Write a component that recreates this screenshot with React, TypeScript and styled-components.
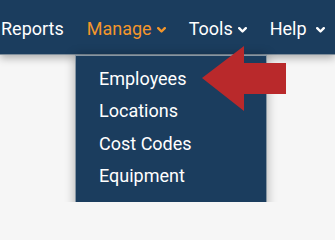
import styled, { createGlobalStyle } from "styled-components";

const GlobalStyle = createGlobalStyle`
  html, body {
    margin: 0;
    padding: 0;
    background: #f6f6f6;
    font-family: Roboto, "Liberation Sans", sans-serif;
  }
`;

const navItems = [
  { label: "Reports", caret: false },
  { label: "Manage", caret: true, active: true },
  { label: "Tools", caret: true },
  { label: "Help", caret: true, caretGap: 9 },
];

const menuItems = ["Employees", "Locations", "Cost Codes", "Equipment"];

const Chevron = ({ color }: { color: string }) => (
  <svg width="9" height="6" viewBox="0 0 9 6">
    <polyline
      points="1.2,1.2 4.5,4.5 7.8,1.2"
      fill="none"
      stroke={color}
      strokeWidth="2.4"
      strokeLinecap="round"
      strokeLinejoin="round"
    />
  </svg>
);

export default function App() {
  return (
    <>
      <GlobalStyle />
      <Page>
        <NavBar>
          {navItems.map((item) => (
            <NavItem key={item.label} $active={item.active}>
              {item.label}
              {item.caret && (
                <Caret $gap={item.caretGap ?? 5}>
                  <Chevron color={item.active ? "#f4962b" : "#ffffff"} />
                </Caret>
              )}
            </NavItem>
          ))}
        </NavBar>

        <Dropdown>
          {menuItems.map((m) => (
            <MenuItem key={m}>{m}</MenuItem>
          ))}
        </Dropdown>

        <Pointer width="90" height="70" viewBox="0 0 90 70">
          <polygon
            points="2,34 44,2 44,19 86,19 86,50 44,50 44,67"
            fill="#b9292b"
          />
        </Pointer>
      </Page>
    </>
  );
}

const Page = styled.div`
  position: relative;
  width: 335px;
  height: 202px;
  overflow: hidden;
  background: #f6f6f6;
`;

const NavBar = styled.nav`
  display: flex;
  align-items: flex-start;
  gap: 23px;
  height: 55px;
  padding: 18px 0 0 1px;
  box-sizing: border-box;
  background: #1b3d5e;
  box-shadow: 0 3px 8px rgba(0, 0, 0, 0.3);
  border-bottom: 1px solid #7f8e9b;
`;

const NavItem = styled.div<{ $active?: boolean }>`
  display: flex;
  align-items: center;
  font-size: 18px;
  line-height: 21px;
  white-space: nowrap;
  color: ${({ $active }) => ($active ? "#f4962b" : "#ffffff")};
`;

const Caret = styled.span<{ $gap: number }>`
  display: flex;
  margin-left: ${({ $gap }) => $gap}px;
  margin-top: 3px;
`;

const Dropdown = styled.ul`
  position: absolute;
  left: 75px;
  top: 55px;
  width: 192px;
  height: 160px;
  margin: 0;
  padding: 7px 0 0 23px;
  box-sizing: border-box;
  list-style: none;
  background: #1b3d5e;
  border: 1px solid #8796a3;
  box-shadow: 0 0 10px rgba(0, 0, 0, 0.3);
`;

const MenuItem = styled.li`
  font-size: 18px;
  line-height: 32.3px;
  color: #ffffff;
  white-space: nowrap;
`;

const Pointer = styled.svg`
  position: absolute;
  left: 200px;
  top: 44px;
`;
